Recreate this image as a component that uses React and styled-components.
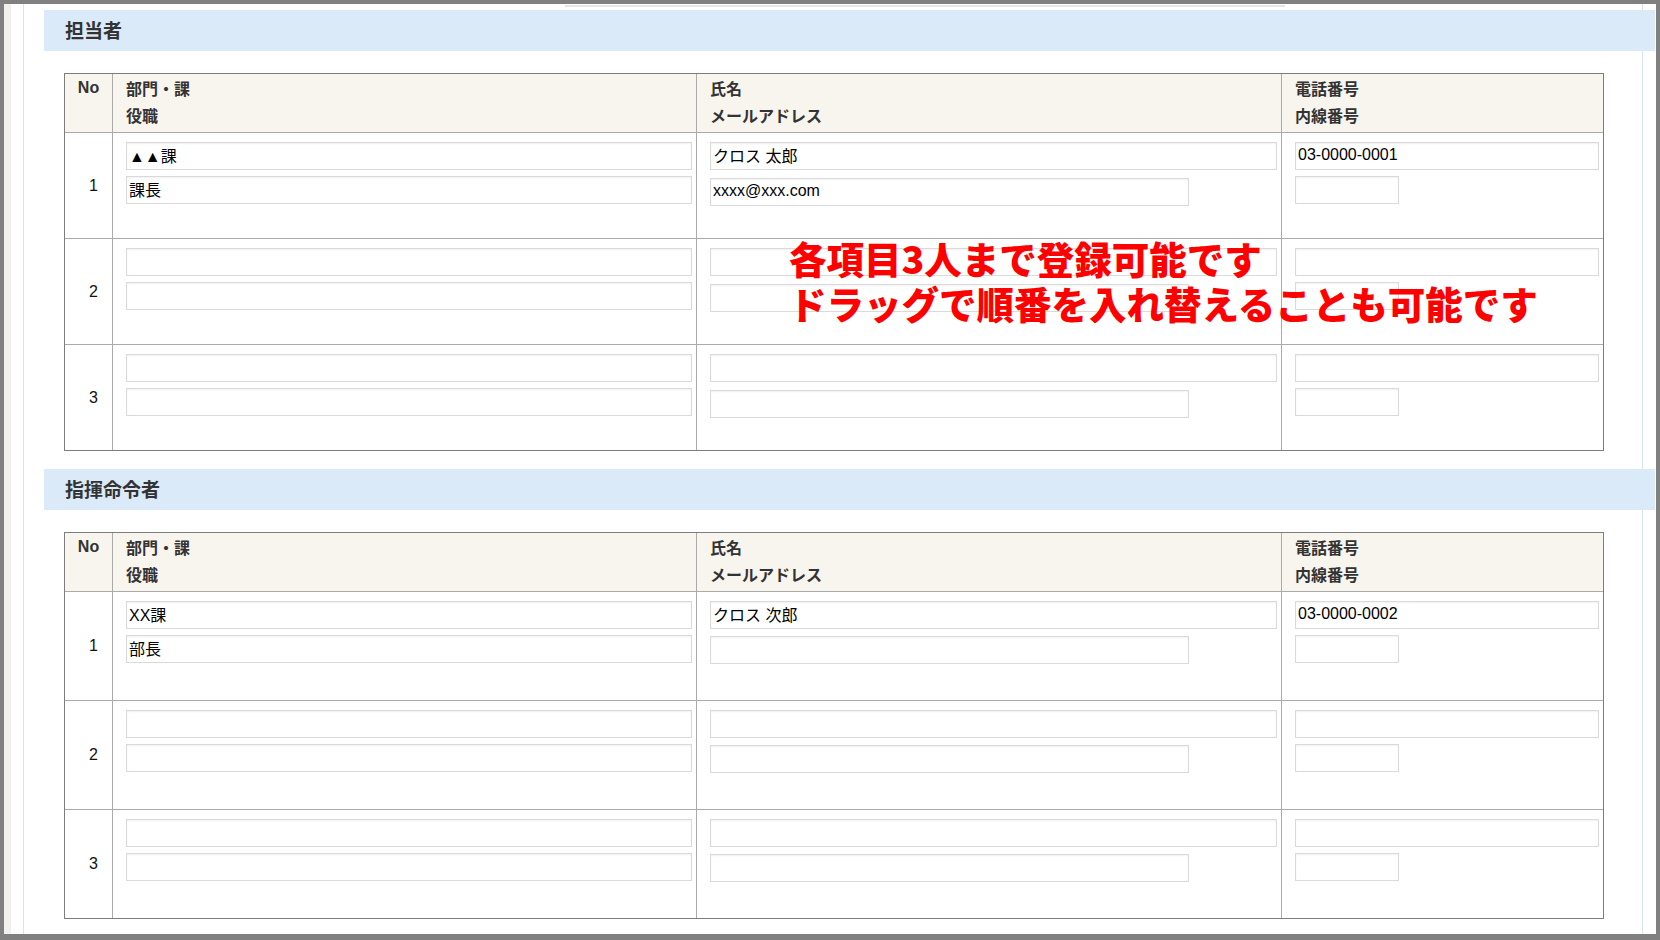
import React from "react";
import styled, { createGlobalStyle } from "styled-components";

const GlobalStyle = createGlobalStyle`
  html, body {
    margin: 0;
    padding: 0;
  }
  body {
    font-family: "Liberation Sans", "Noto Sans CJK JP", sans-serif;
    background: #ffffff;
  }
`;

const Frame = styled.div`
  position: relative;
  width: 1660px;
  height: 940px;
  box-sizing: border-box;
  border: 4px solid #808080;
  border-bottom-width: 6px;
  background: #ffffff;
  display: flex;
  overflow: hidden;
`;

const SideStrip = styled.div`
  width: 7px;
  flex-shrink: 0;
  background: #f2f0ec;
`;

const Main = styled.div`
  flex: 1;
  display: flex;
  padding-left: 12px;
`;

const Container = styled.div`
  width: 1620px;
  box-sizing: border-box;
  border-left: 1px solid #d6e4f4;
  border-right: 1px solid #d6e4f4;
`;

const TopRemnant = styled.div`
  margin: 1px 0 0 541px;
  width: 720px;
  height: 2px;
  background: #e6e6e6;
`;

const Band = styled.div`
  margin: ${(p) => p.$top}px -13px 0 20px;
  height: 41px;
  box-sizing: border-box;
  display: flex;
  align-items: center;
  padding: 0 0 3px 21px;
  background: #dbeaf8;
  font-size: 19px;
  font-weight: 700;
  color: #333333;
`;

const Table = styled.div`
  margin: 22px 0 0 40px;
  width: 1540px;
  box-sizing: border-box;
  border: 1px solid #7d7d7d;
`;

const Row = styled.div`
  display: grid;
  grid-template-columns: 48px 584px 585px 1fr;
  height: ${(p) => p.$height}px;
  box-sizing: border-box;
  background: ${(p) => (p.$head ? "#f8f5ef" : "#ffffff")};
  border-top: ${(p) => (p.$first ? "none" : "1px solid #aaaaaa")};
`;

const HeadCell = styled.div`
  box-sizing: border-box;
  padding: ${(p) => (p.$center ? "0" : "2px 4px 0 13px")};
  text-align: ${(p) => (p.$center ? "center" : "left")};
  line-height: 27px;
  font-size: 16px;
  font-weight: 700;
  color: #333333;
  border-right: ${(p) => (p.$last ? "none" : "1px solid #aaaaaa")};
`;

const NumCell = styled.div`
  display: flex;
  align-items: center;
  justify-content: center;
  padding-left: 10px;
  font-size: 16px;
  color: #111111;
  border-right: 1px solid #aaaaaa;
`;

const FieldCell = styled.div`
  display: flex;
  flex-direction: column;
  align-items: flex-start;
  gap: 6px;
  box-sizing: border-box;
  padding: 9px 4px 0 13px;
  border-right: ${(p) => (p.$last ? "none" : "1px solid #aaaaaa")};
`;

const Input = styled.input`
  display: block;
  width: ${(p) => p.$width || "100%"};
  height: 28px;
  box-sizing: border-box;
  margin: ${(p) => p.$shift || 0}px 0 0;
  padding: 0 2px 3px;
  border: 1px solid #dadada;
  border-radius: 0;
  box-shadow: inset 0 1px 2px rgba(0, 0, 0, 0.06);
  background: #ffffff;
  font-family: "Liberation Sans", "Noto Sans CJK JP", sans-serif;
  font-size: 16px;
  line-height: 20px;
  color: #000000;
  outline: none;
`;

const Notice = styled.div`
  position: absolute;
  left: 785px;
  top: 231px;
  font-family: "Noto Sans CJK JP", sans-serif;
  font-size: 37.5px;
  line-height: 45px;
  font-weight: 900;
  color: #ff0000;
  white-space: nowrap;
`;

const sections = [
  {
    title: "担当者",
    top: 3,
    rowHeight: 106,
    mailShift: 2,
    rows: [
      { dept: "▲▲課", post: "課長", name: "クロス 太郎", mail: "xxxx@xxx.com", tel: "03-0000-0001", ext: "" },
      {},
      {},
    ],
  },
  {
    title: "指揮命令者",
    top: 18,
    rowHeight: 109,
    mailShift: 1,
    rows: [
      { dept: "XX課", post: "部長", name: "クロス 次郎", mail: "", tel: "03-0000-0002", ext: "" },
      {},
      {},
    ],
  },
];

const PersonTable = ({ rows, rowHeight, mailShift }) => (
  <Table>
    <Row $head $first $height={58}>
      <HeadCell $center>No</HeadCell>
      <HeadCell>
        部門・課
        <br />
        役職
      </HeadCell>
      <HeadCell>
        氏名
        <br />
        メールアドレス
      </HeadCell>
      <HeadCell $last>
        電話番号
        <br />
        内線番号
      </HeadCell>
    </Row>
    {rows.map((item, i) => (
      <Row key={i} $height={rowHeight}>
        <NumCell>{i + 1}</NumCell>
        <FieldCell>
          <Input readOnly defaultValue={item.dept || ""} />
          <Input readOnly defaultValue={item.post || ""} />
        </FieldCell>
        <FieldCell>
          <Input readOnly defaultValue={item.name || ""} />
          <Input readOnly $width="479px" $shift={mailShift} defaultValue={item.mail || ""} />
        </FieldCell>
        <FieldCell $last>
          <Input readOnly defaultValue={item.tel || ""} />
          <Input readOnly $width="104px" defaultValue={item.ext || ""} />
        </FieldCell>
      </Row>
    ))}
  </Table>
);

const App = () => {
  return (
    <>
      <GlobalStyle />
      <Frame>
        <SideStrip />
        <Main>
          <Container>
            <TopRemnant />
            {sections.map((s) => (
              <React.Fragment key={s.title}>
                <Band $top={s.top}>{s.title}</Band>
                <PersonTable rows={s.rows} rowHeight={s.rowHeight} mailShift={s.mailShift} />
              </React.Fragment>
            ))}
          </Container>
        </Main>
        {/* 注意書き（画面の上に重ねた赤字） */}
        <Notice>
          各項目3人まで登録可能です
          <br />
          ドラッグで順番を入れ替えることも可能です
        </Notice>
      </Frame>
    </>
  );
};

export default App;
